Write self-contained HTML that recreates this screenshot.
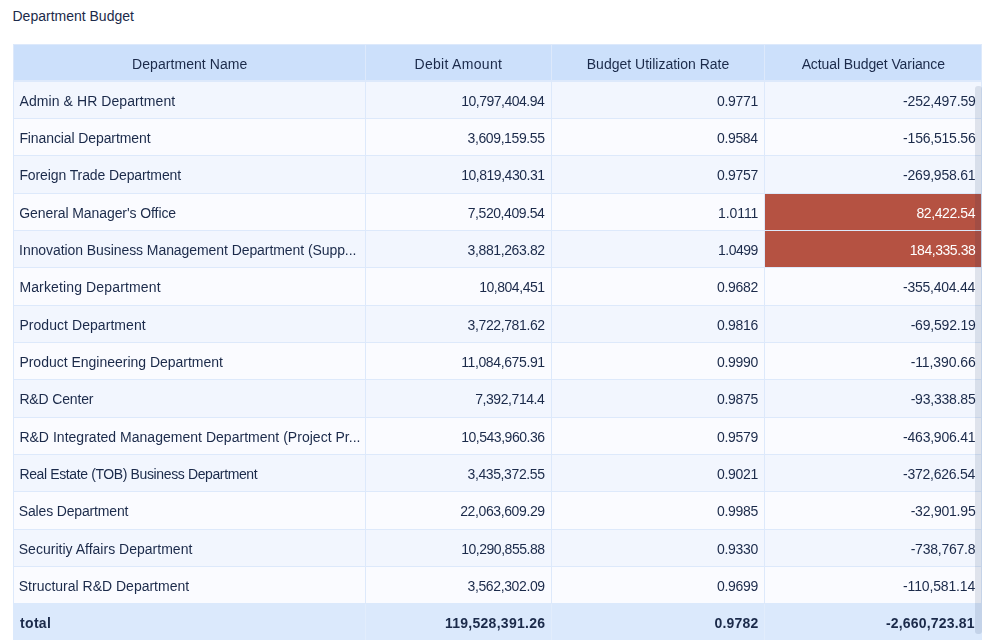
<!DOCTYPE html>
<html><head><meta charset="utf-8"><title>Department Budget</title>
<style>
html,body{margin:0;padding:0;background:#fff;}
body{width:995px;height:640px;overflow:hidden;position:relative;font-family:"Liberation Sans","DejaVu Sans",sans-serif;color:#1b2a4a;}
.title{position:absolute;left:12.5px;top:8.3px;font-size:14px;line-height:16px;color:#1b2a4a;white-space:nowrap;}
.bg{position:absolute;}
.hd{background:#cce0fb;}
.o{background:#f2f6fe;}
.e{background:#fafbff;}
.red{background:#b55242;}
.tt{background:#dbe9fc;}
.ln{position:absolute;background:#dde9fb;}
.x{position:absolute;white-space:nowrap;font-size:14px;line-height:16px;height:16px;}
.tx{position:absolute;left:0;top:0;width:995px;height:640px;will-change:transform;}
.b{font-weight:bold;}
.w{color:#fff;}
.sb{position:absolute;left:975.3px;top:86.3px;width:6.3px;height:548.2px;border-radius:3px;background:rgba(20,40,90,0.115);}
</style></head><body>
<div class="title">Department Budget</div>

<div class="bg hd" style="left:13.00px;top:45.20px;width:969.00px;height:35.20px"></div>
<div class="bg o" style="left:13.00px;top:81.67px;width:969.00px;height:37.33px"></div>
<div class="bg e" style="left:13.00px;top:119.00px;width:969.00px;height:37.33px"></div>
<div class="bg o" style="left:13.00px;top:156.34px;width:969.00px;height:37.33px"></div>
<div class="bg e" style="left:13.00px;top:193.67px;width:969.00px;height:37.33px"></div>
<div class="bg red" style="left:765.00px;top:193.67px;width:216.00px;height:36.33px"></div>
<div class="bg o" style="left:13.00px;top:231.00px;width:969.00px;height:37.33px"></div>
<div class="bg red" style="left:765.00px;top:231.00px;width:216.00px;height:36.33px"></div>
<div class="bg e" style="left:13.00px;top:268.34px;width:969.00px;height:37.33px"></div>
<div class="bg o" style="left:13.00px;top:305.67px;width:969.00px;height:37.33px"></div>
<div class="bg e" style="left:13.00px;top:343.00px;width:969.00px;height:37.33px"></div>
<div class="bg o" style="left:13.00px;top:380.34px;width:969.00px;height:37.33px"></div>
<div class="bg e" style="left:13.00px;top:417.67px;width:969.00px;height:37.33px"></div>
<div class="bg o" style="left:13.00px;top:455.00px;width:969.00px;height:37.33px"></div>
<div class="bg e" style="left:13.00px;top:492.34px;width:969.00px;height:37.33px"></div>
<div class="bg o" style="left:13.00px;top:529.67px;width:969.00px;height:37.33px"></div>
<div class="bg e" style="left:13.00px;top:567.00px;width:969.00px;height:37.33px"></div>
<div class="bg tt" style="left:13.30px;top:603.00px;width:968.70px;height:37.00px"></div>
<div class="ln" style="left:13.00px;top:80.40px;width:969.00px;height:1.3px"></div>
<div class="ln" style="left:13.00px;top:118.00px;width:969.00px;height:1px"></div>
<div class="ln" style="left:13.00px;top:155.33px;width:969.00px;height:1px"></div>
<div class="ln" style="left:13.00px;top:192.67px;width:969.00px;height:1px"></div>
<div class="ln" style="left:13.00px;top:230.00px;width:969.00px;height:1px"></div>
<div class="ln" style="left:13.00px;top:267.33px;width:969.00px;height:1px"></div>
<div class="ln" style="left:13.00px;top:304.67px;width:969.00px;height:1px"></div>
<div class="ln" style="left:13.00px;top:342.00px;width:969.00px;height:1px"></div>
<div class="ln" style="left:13.00px;top:379.33px;width:969.00px;height:1px"></div>
<div class="ln" style="left:13.00px;top:416.67px;width:969.00px;height:1px"></div>
<div class="ln" style="left:13.00px;top:454.00px;width:969.00px;height:1px"></div>
<div class="ln" style="left:13.00px;top:491.33px;width:969.00px;height:1px"></div>
<div class="ln" style="left:13.00px;top:528.67px;width:969.00px;height:1px"></div>
<div class="ln" style="left:13.00px;top:566.00px;width:969.00px;height:1px"></div>
<div class="ln" style="left:365.00px;top:44.67px;width:1px;height:595.33px"></div>
<div class="ln" style="left:551.00px;top:44.67px;width:1px;height:595.33px"></div>
<div class="ln" style="left:764.00px;top:44.67px;width:1px;height:595.33px"></div>
<div class="ln" style="left:13.00px;top:44.20px;width:1px;height:558.80px"></div>
<div class="ln" style="left:981.00px;top:44.20px;width:1px;height:558.80px"></div>
<div class="ln" style="left:13.00px;top:44.20px;width:969.00px;height:1.2px"></div>
<div class="ln" style="left:365.00px;top:604px;width:1px;height:36px;background:#e2edfc"></div>
<div class="ln" style="left:551.00px;top:604px;width:1px;height:36px;background:#e2edfc"></div>
<div class="ln" style="left:764.00px;top:604px;width:1px;height:36px;background:#e2edfc"></div>
<div class="bg red" style="left:765.00px;top:193.67px;width:216.00px;height:36.33px"></div>
<div class="bg red" style="left:765.00px;top:231.00px;width:216.00px;height:36.33px"></div>
<div class="sb"></div>
<div class="tx">
<div id="h0" class="x " style="left:132.08px;top:56.15px;letter-spacing:0.059px">Department Name</div>
<div id="h1" class="x " style="left:414.50px;top:56.15px;letter-spacing:0.302px">Debit Amount</div>
<div id="h2" class="x " style="left:586.76px;top:56.15px;letter-spacing:0.004px">Budget Utilization Rate</div>
<div id="h3" class="x " style="left:801.63px;top:56.15px;letter-spacing:-0.091px">Actual Budget Variance</div>
<div id="r0c0" class="x " style="left:19.50px;top:93.15px;letter-spacing:0.082px">Admin &amp; HR Department</div>
<div id="r0c1" class="x " style="left:461.15px;top:93.15px;letter-spacing:-0.492px">10,797,404.94</div>
<div id="r0c2" class="x " style="left:716.99px;top:93.15px;letter-spacing:-0.312px">0.9771</div>
<div id="r0c3" class="x " style="left:903.12px;top:93.15px;letter-spacing:-0.204px">-252,497.59</div>
<div id="r1c0" class="x " style="left:19.38px;top:130.15px;letter-spacing:-0.099px">Financial Department</div>
<div id="r1c1" class="x " style="left:467.55px;top:130.15px;letter-spacing:-0.391px">3,609,159.55</div>
<div id="r1c2" class="x " style="left:716.99px;top:130.15px;letter-spacing:-0.347px">0.9584</div>
<div id="r1c3" class="x " style="left:903.12px;top:130.15px;letter-spacing:-0.212px">-156,515.56</div>
<div id="r2c0" class="x " style="left:19.41px;top:167.15px;letter-spacing:-0.106px">Foreign Trade Department</div>
<div id="r2c1" class="x " style="left:461.15px;top:167.15px;letter-spacing:-0.469px">10,819,430.31</div>
<div id="r2c2" class="x " style="left:716.99px;top:167.15px;letter-spacing:-0.301px">0.9757</div>
<div id="r2c3" class="x " style="left:903.12px;top:167.15px;letter-spacing:-0.231px">-269,958.61</div>
<div id="r3c0" class="x " style="left:19.23px;top:205.15px;letter-spacing:-0.083px">General Manager's Office</div>
<div id="r3c1" class="x " style="left:467.69px;top:205.15px;letter-spacing:-0.422px">7,520,409.54</div>
<div id="r3c2" class="x " style="left:717.97px;top:205.15px;letter-spacing:-0.067px">1.0111</div>
<div id="r3c3" class="x w" style="left:916.38px;top:205.15px;letter-spacing:-0.389px">82,422.54</div>
<div id="r4c0" class="x " style="left:19.11px;top:242.15px;letter-spacing:-0.073px">Innovation Business Management Department (Supp...</div>
<div id="r4c1" class="x " style="left:467.55px;top:242.15px;letter-spacing:-0.376px">3,881,263.82</div>
<div id="r4c2" class="x " style="left:717.97px;top:242.15px;letter-spacing:-0.504px">1.0499</div>
<div id="r4c3" class="x w" style="left:909.78px;top:242.15px;letter-spacing:-0.454px">184,335.38</div>
<div id="r5c0" class="x " style="left:19.38px;top:279.15px;letter-spacing:0.139px">Marketing Department</div>
<div id="r5c1" class="x " style="left:479.14px;top:279.15px;letter-spacing:-0.458px">10,804,451</div>
<div id="r5c2" class="x " style="left:716.99px;top:279.15px;letter-spacing:-0.299px">0.9682</div>
<div id="r5c3" class="x " style="left:903.12px;top:279.15px;letter-spacing:-0.258px">-355,404.44</div>
<div id="r6c0" class="x " style="left:19.41px;top:317.15px;letter-spacing:0.057px">Product Department</div>
<div id="r6c1" class="x " style="left:467.55px;top:317.15px;letter-spacing:-0.376px">3,722,781.62</div>
<div id="r6c2" class="x " style="left:716.99px;top:317.15px;letter-spacing:-0.320px">0.9816</div>
<div id="r6c3" class="x " style="left:910.66px;top:317.15px;letter-spacing:-0.203px">-69,592.19</div>
<div id="r7c0" class="x " style="left:19.38px;top:354.15px;letter-spacing:-0.011px">Product Engineering Department</div>
<div id="r7c1" class="x " style="left:461.15px;top:354.15px;letter-spacing:-0.377px">11,084,675.91</div>
<div id="r7c2" class="x " style="left:716.99px;top:354.15px;letter-spacing:-0.309px">0.9990</div>
<div id="r7c3" class="x " style="left:910.63px;top:354.15px;letter-spacing:-0.091px">-11,390.66</div>
<div id="r8c0" class="x " style="left:19.41px;top:391.15px;letter-spacing:-0.155px">R&amp;D Center</div>
<div id="r8c1" class="x " style="left:475.15px;top:391.15px;letter-spacing:-0.424px">7,392,714.4</div>
<div id="r8c2" class="x " style="left:716.99px;top:391.15px;letter-spacing:-0.313px">0.9875</div>
<div id="r8c3" class="x " style="left:910.66px;top:391.15px;letter-spacing:-0.212px">-93,338.85</div>
<div id="r9c0" class="x " style="left:19.38px;top:429.15px;letter-spacing:0.021px">R&amp;D Integrated Management Department (Project Pr...</div>
<div id="r9c1" class="x " style="left:461.15px;top:429.15px;letter-spacing:-0.467px">10,543,960.36</div>
<div id="r9c2" class="x " style="left:716.99px;top:429.15px;letter-spacing:-0.311px">0.9579</div>
<div id="r9c3" class="x " style="left:903.12px;top:429.15px;letter-spacing:-0.230px">-463,906.41</div>
<div id="r10c0" class="x " style="left:19.41px;top:466.15px;letter-spacing:-0.378px">Real Estate (TOB) Business Department</div>
<div id="r10c1" class="x " style="left:467.55px;top:466.15px;letter-spacing:-0.395px">3,435,372.55</div>
<div id="r10c2" class="x " style="left:716.99px;top:466.15px;letter-spacing:-0.312px">0.9021</div>
<div id="r10c3" class="x " style="left:903.12px;top:466.15px;letter-spacing:-0.258px">-372,626.54</div>
<div id="r11c0" class="x " style="left:18.76px;top:503.15px;letter-spacing:-0.153px">Sales Department</div>
<div id="r11c1" class="x " style="left:460.15px;top:503.15px;letter-spacing:-0.378px">22,063,609.29</div>
<div id="r11c2" class="x " style="left:716.99px;top:503.15px;letter-spacing:-0.313px">0.9985</div>
<div id="r11c3" class="x " style="left:910.63px;top:503.15px;letter-spacing:-0.212px">-32,901.95</div>
<div id="r12c0" class="x " style="left:18.76px;top:541.15px;letter-spacing:0.012px">Securitiy Affairs Department</div>
<div id="r12c1" class="x " style="left:461.15px;top:541.15px;letter-spacing:-0.461px">10,290,855.88</div>
<div id="r12c2" class="x " style="left:716.99px;top:541.15px;letter-spacing:-0.309px">0.9330</div>
<div id="r12c3" class="x " style="left:910.66px;top:541.15px;letter-spacing:-0.230px">-738,767.8</div>
<div id="r13c0" class="x " style="left:18.76px;top:578.15px;letter-spacing:-0.001px">Structural R&amp;D Department</div>
<div id="r13c1" class="x " style="left:467.55px;top:578.15px;letter-spacing:-0.381px">3,562,302.09</div>
<div id="r13c2" class="x " style="left:716.99px;top:578.15px;letter-spacing:-0.311px">0.9699</div>
<div id="r13c3" class="x " style="left:903.12px;top:578.15px;letter-spacing:-0.158px">-110,581.14</div>
<div id="tc0" class="x b" style="left:20.02px;top:615.15px;letter-spacing:0.324px">total</div>
<div id="tc1" class="x b" style="left:444.98px;top:615.15px;letter-spacing:0.267px">119,528,391.26</div>
<div id="tc2" class="x b" style="left:714.45px;top:615.15px;letter-spacing:0.224px">0.9782</div>
<div id="tc3" class="x b" style="left:885.99px;top:615.15px;letter-spacing:0.179px">-2,660,723.81</div>
</div>
</body></html>
